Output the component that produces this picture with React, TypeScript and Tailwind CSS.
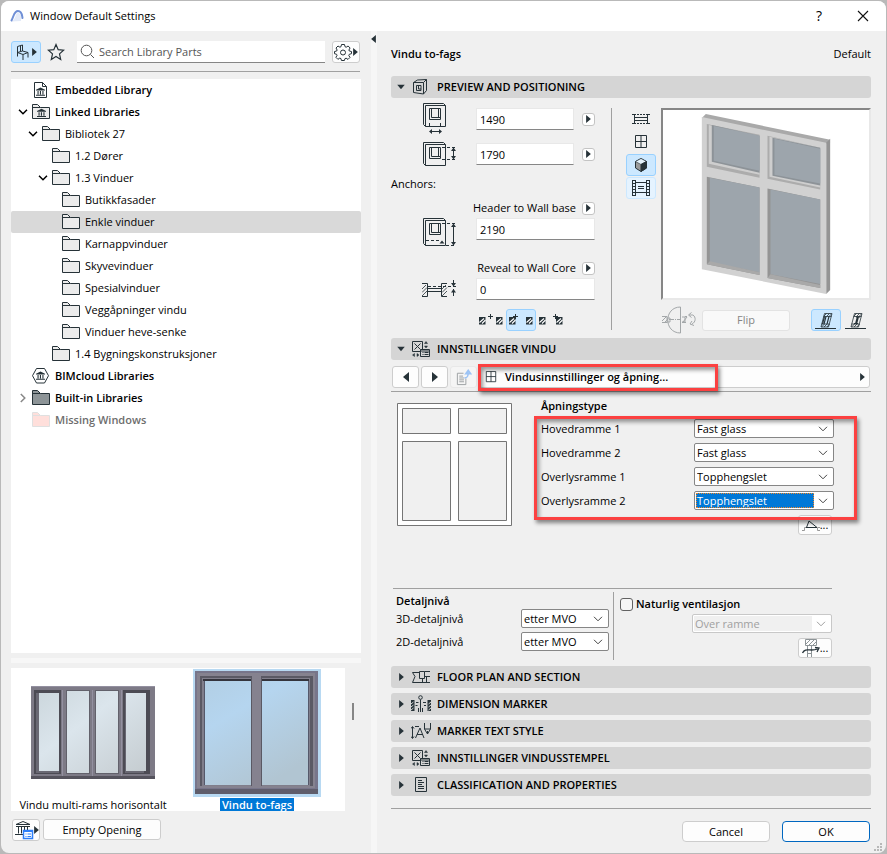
import React, { useState } from 'react';

const INK = '#263238';

type IconProps = { className?: string };

const Arrow: React.FC<{ dir: 'left' | 'right' | 'down'; className?: string }> = ({ dir, className }) => {
  const points = {
    left: '6,0 6,10 0,5',
    right: '0,0 0,10 6,5',
    down: '0,1 10,1 5,7',
  };
  return (
    <svg viewBox={dir === 'down' ? '0 0 10 8' : '0 0 6 10'} className={className} fill={INK} aria-hidden="true">
      <polygon points={points[dir]} />
    </svg>
  );
};

const Chevron: React.FC<IconProps> = ({ className }) => (
  <svg viewBox="0 0 10 6" className={className} fill="none" stroke="currentColor" aria-hidden="true">
    <path d="M1 .8 5 4.8 9 .8" />
  </svg>
);

const Bank = () => (
  <g fill={INK} stroke="none">
    <path d="M4.500 0 9 2.200V3H0v-.8z" />
    <path d="M1.500 3.500h1.100V7H1.500zM3.900 3.500H5V7H3.900zM6.400 3.500h1.100V7H6.400zM0 7.200h9v1H0z" />
  </g>
);

const Folder: React.FC<{ kind: string }> = ({ kind }) => {
  const missing = kind === 'missing';
  const fill = missing ? '#ffdfdb' : kind === 'builtin' ? '#8d9497' : '#ececec';
  const stroke = missing ? '#dfe0e0' : INK;
  if (kind === 'embedded') {
    return (
      <svg viewBox="0 0 19 18" className="h-[18px] w-[19px]" fill="#fff" stroke={INK} aria-hidden="true">
        <path d="M2.500 1.500h8l4 4v11h-12zM10.500 1.500v4h4" />
        <g transform="translate(4 6.500)"><Bank /></g>
      </svg>
    );
  }
  if (kind === 'cloud') {
    return (
      <svg viewBox="0 0 19 18" className="h-[18px] w-[19px]" fill="#fff" stroke={INK} aria-hidden="true">
        <path d="M4.500 1.500h8l4 7.200-4 7.300h-8l-4-7.300z" />
        <g transform="translate(4 4.600)"><Bank /></g>
      </svg>
    );
  }
  return (
    <svg viewBox="0 0 19 18" className="h-[18px] w-[19px]" fill={fill} stroke={stroke} aria-hidden="true">
      <path d="M.5 15.500V1.500h5l3 3h9v11z" />
      <path d="M.5 4.500h8" />
      {kind === 'linked' && <g transform="translate(5 5.800)"><Bank /></g>}
    </svg>
  );
};

const CubeIcon = () => (
  <svg viewBox="0 0 20 18" className="h-[18px] w-5" fill="none" stroke={INK} aria-hidden="true">
    <path d="M2.500 4.500h10v11.500l-10-1.500zM2.500 4.500l4-2.500 9-.5v11l-3 3.500M12.500 4.500l3-3" />
    <path d="M5.500 7.500h4.500v5h-4.500zM7.500 7.500v3.500h2.500" />
  </svg>
);

const StampIcon = () => (
  <svg viewBox="0 0 20 18" className="h-[18px] w-5" fill="none" stroke={INK} aria-hidden="true">
    <path d="M1.500 1.500h10v10h-10zM3.500 3.500l6 6M9.500 3.500l-6 6" />
    <path d="M9.500 9.500h9v7h-9z" fill="#d5d5d5" />
    <path d="M9.500 11h9M11.500 12.500h1M13.500 12.500h4M11.500 14.500h1M13.500 14.500h4" />
    <path d="M13.500 3.500l1.500-2 1.500 2zM13.500 6l1.500 2 1.500-2zM3.500 13.500l-2 1.500 2 1.500zM6 13.500 8 15l-2 1.500z" fill={INK} strokeWidth=".5" />
  </svg>
);

const FloorPlanIcon = () => (
  <svg viewBox="0 0 20 18" className="h-[18px] w-5" fill="none" stroke={INK} aria-hidden="true">
    <path d="M8 4.500H1.500l2.500 4-2.500 6H19M8.500 3.500h5v7h-5zM13.500 3.500H19M13.500 8.500H19M15.500 8.500v6M11.500 10.500v4" />
  </svg>
);

const DimensionIcon = () => (
  <svg viewBox="0 0 20 18" className="h-[18px] w-5" fill="none" stroke={INK} aria-hidden="true">
    <path d="M0 5h3.500v11H0zM20 5h-3.500v11H20z" fill={INK} stroke="none" />
    <path d="M0 9l2.500-2M0 12l2.500-2M0 15l2.500-2M17.500 9 20 7M17.500 12l2.500-2M17.500 15l2.500-2" stroke="#d5d5d5" />
    <circle cx="9.500" cy="2.500" r="1.800" />
    <path d="M9.500 4.500V17M5 7.500h2.500M12 7.500h3M7.500 13v4M11.500 13v4M4.500 10.500h2M13 10.500h2" />
  </svg>
);

const TextStyleIcon = () => (
  <svg viewBox="0 0 20 18" className="h-[18px] w-5" fill="none" stroke={INK} aria-hidden="true">
    <path d="M1.500 5v11M0 6.500l1.500-2 1.500 2M0 14.500l1.500 2 1.500-2M4 4.500h4M4.500 16 9 6l4 10M6 12.500h6" />
    <path d="M13.500 1v6l3 5 3-5V1M13.500 7h6M16.500 12v-3" />
  </svg>
);

const ClassIcon = () => (
  <svg viewBox="0 0 20 18" className="h-[18px] w-5" fill="none" stroke={INK} aria-hidden="true">
    <path d="M4.500 1.500h11v14h-11zM7 4.500h4M7 6.500h6M7 8.500h4M7 10.500h6M7 12.500h6" />
  </svg>
);

const GridWindow: React.FC<IconProps> = ({ className }) => (
  <svg viewBox="0 0 14 14" className={className} fill="none" stroke={INK} aria-hidden="true">
    <path d="M1.500.5h11v12h-11zM7 .5v12M1.500 6.500h11" />
  </svg>
);

const WidthIcon = () => (
  <svg viewBox="0 0 36 32" className="h-8 w-9" fill="none" stroke={INK} aria-hidden="true">
    <path d="M3.500 2.500h20v21h-20zM3.500 23.500l-2-2V.5h20l2 2M7.500 5.500h11v11h-11zM9.500 5.500v9h9M16.500 5.500v9" />
    <path d="M7.500 20v3M18.500 20v3M8 28.500h11" />
    <path d="M7 28.500 10 26v5zM20 28.500 17 26v5z" fill={INK} stroke="none" />
  </svg>
);

const HeightIcon = () => (
  <svg viewBox="0 0 36 32" className="h-8 w-9" fill="none" stroke={INK} aria-hidden="true">
    <path d="M3.500 6.500h20v21h-20zM3.500 27.500l-2-2v-21h20l2 2M7.500 9.500h11v11h-11zM9.500 9.500v9h9M16.500 9.500v9M31.500 10v11" />
    <path d="M20 9.500h14M20 21.500h14" strokeDasharray="3 2" />
    <path d="M31.500 9.500 29 13h5zM31.500 21.500 29 18h5z" fill={INK} stroke="none" />
  </svg>
);

const HeaderAnchorIcon = () => (
  <svg viewBox="0 0 36 30" className="h-[30px] w-9" fill="none" stroke={INK} aria-hidden="true">
    <path d="M3.500 2.500h20v25h-20zM3.500 27.500l-2-2V.5h20l2 2M7.500 5.500h11v11h-11zM9.500 5.500v9h9M16.500 5.500v9M31.500 7v19" />
    <path d="M20 5.500h14M4 22.500h14M24 27.500h10" strokeDasharray="3 2" />
    <path d="M31.500 5.500 29 9h5zM31.500 27.500 29 24h5zM20 22.500l-2.500 3h5z" fill={INK} stroke="none" />
  </svg>
);

const RevealIcon = () => (
  <svg viewBox="0 0 36 24" className="h-6 w-9" fill="none" stroke={INK} aria-hidden="true">
    <path d="M0 5.500h5.500v13H0M25 5.500h-5.500v13H25" />
    <path d="M0 11l4-4M0 14.500l5-5M0 18l5-5M20 11l4-4M20 14.500l5-5M20 18l5-5" strokeWidth=".8" />
    <path d="M6 10.500h13M6 13.500h13M31.500 2v6M31.500 11v7" />
    <path d="M6 8.500h28" strokeDasharray="3 2" />
    <path d="M31.500 8.500 29 5h5zM31.500 11 29 14.500h5z" fill={INK} stroke="none" />
  </svg>
);

const Hatch: React.FC<{ x: number }> = ({ x }) => (
  <g>
    <path d={`M${x} 6h6.500v7.500h-6.500z`} fill={INK} stroke="none" />
    <path d={`M${x + 0.5} 11.500l4.500-4M${x + 3} 12.500l3.500-3.500`} stroke="#fff" strokeWidth="1.100" />
  </g>
);

// the small cross marks which side of the wall carries the anchor
const AnchorGlyph: React.FC<{ first: number; second: number; cross: number }> = ({ first, second, cross }) => (
  <svg viewBox="0 0 26 18" className="h-[18px] w-[26px]" fill="none" aria-hidden="true">
    <Hatch x={first} />
    <Hatch x={second} />
    <path d={`M${cross - 2} 5.500h5M${cross + 0.5} 3v5`} stroke={INK} />
  </svg>
);

const SectionBar: React.FC<{ title: string; icon: React.ReactNode; open?: boolean }> = ({ title, icon, open }) => (
  <button type="button" aria-expanded={!!open} className="flex h-[22px] w-full shrink-0 items-center rounded-[3px] bg-[#d5d5d5] text-left font-semibold">
    <span className="flex w-5 justify-center">
      <Arrow dir={open ? 'down' : 'right'} className={open ? 'h-[6px] w-2' : 'h-2 w-[5px]'} />
    </span>
    {icon}
    <span className="ml-[6px]">{title}</span>
  </button>
);

const StepButton: React.FC<{ label: string }> = ({ label }) => (
  <button type="button" aria-label={label} className="flex h-[13px] w-[13px] shrink-0 items-center justify-center rounded-[3px] border border-[#c4c4c4] bg-white">
    <Arrow dir="right" className="h-2 w-[5px]" />
  </button>
);

const fieldClass = 'h-[22px] w-full border border-[#e8e8e8] border-b-[#868686] bg-white px-[3px] outline-none';

type DropProps = {
  id: string;
  value: string;
  label?: string;
  selected?: boolean;
  disabled?: boolean;
  options?: string[];
};

const Drop: React.FC<DropProps> = ({ id, value, label, selected, disabled, options = [] }) => {
  const [current, setCurrent] = useState(value);
  return (
    <div className={`flex h-[19px] w-full items-center rounded-[2px] border bg-white p-px ${disabled ? 'border-[#c8c8c8] text-[#a0a0a0]' : 'border-[#868686]'}`}>
      <select
        id={id}
        aria-label={label}
        value={current}
        disabled={disabled}
        onChange={(e) => setCurrent(e.target.value)}
        className={`h-[15px] min-w-0 flex-1 appearance-none outline-none ${selected ? 'border border-dotted border-[#f08728] bg-[#0078d7] leading-[13px] text-white' : 'pl-px leading-[15px]'} ${disabled ? 'bg-[#f0f0f0] opacity-100' : ''}`}
      >
        <option>{value}</option>
        {options.map((o) => <option key={o}>{o}</option>)}
      </select>
      <span className="flex w-[18px] justify-center text-[#444]">
        <Chevron className={disabled ? 'h-[6px] w-[10px] opacity-50' : 'h-[6px] w-[10px]'} />
      </span>
    </div>
  );
};

const tree = [
  { name: 'Embedded Library', depth: 0, kind: 'embedded', bold: true },
  { name: 'Linked Libraries', depth: 0, kind: 'linked', bold: true, state: 'open' },
  { name: 'Bibliotek 27', depth: 1, kind: 'folder', state: 'open' },
  { name: '1.2 Dører', depth: 2, kind: 'folder' },
  { name: '1.3 Vinduer', depth: 2, kind: 'folder', state: 'open' },
  { name: 'Butikkfasader', depth: 3, kind: 'folder' },
  { name: 'Enkle vinduer', depth: 3, kind: 'folder' },
  { name: 'Karnappvinduer', depth: 3, kind: 'folder' },
  { name: 'Skyvevinduer', depth: 3, kind: 'folder' },
  { name: 'Spesialvinduer', depth: 3, kind: 'folder' },
  { name: 'Veggåpninger vindu', depth: 3, kind: 'folder' },
  { name: 'Vinduer heve-senke', depth: 3, kind: 'folder' },
  { name: '1.4 Bygningskonstruksjoner', depth: 2, kind: 'folder' },
  { name: 'BIMcloud Libraries', depth: 0, kind: 'cloud', bold: true },
  { name: 'Built-in Libraries', depth: 0, kind: 'builtin', bold: true, state: 'closed' },
  { name: 'Missing Windows', depth: 0, kind: 'missing', bold: true },
];

const indents = ['pl-[7px]', 'pl-[17px]', 'pl-[27px]', 'pl-[37px]'];

const MultiThumb = () => (
  <svg viewBox="0 0 128 128" className="h-32 w-32 shrink-0" aria-hidden="true">
    <defs>
      <linearGradient id="paleGlass" x1="0" y1="0" x2="1" y2="1">
        <stop offset="0" stopColor="#ccd7dd" />
        <stop offset=".4" stopColor="#dbe5ec" />
        <stop offset="1" stopColor="#c5ccd0" />
      </linearGradient>
    </defs>
    <path d="M2 17h124v93H2z" fill="#7d7a86" />
    <path d="M5 21h27v84H5zM94 21h27v84H94z" fill="#4c4b54" />
    <path d="M7 24h23v80H7zM96 24h19v80H96z" fill="#696873" />
    <path d="M37 21h24v84H37zM66 21h24v84H66z" fill="#62616b" />
    <path d="M10 24h20v78H10zM38 22h22v82H38zM67 22h22v82H67zM97 24h20v78H97z" fill="url(#paleGlass)" />
    <path d="M2 17.500h124M33.500 21v86M63.500 21v86M92.500 21v86" stroke="#9390a0" fill="none" />
    <path d="M2 107h124v3H2z" fill="#55535d" />
  </svg>
);

const TwoThumb = () => (
  <svg viewBox="0 0 128 128" className="h-32 w-32 shrink-0 bg-[#b8d9f2]" aria-hidden="true">
    <defs>
      <linearGradient id="blueGlass" x1="0" y1="0" x2=".6" y2="1">
        <stop offset="0" stopColor="#b2cfe5" />
        <stop offset=".35" stopColor="#b5d5ef" />
        <stop offset="1" stopColor="#b1c5d2" />
      </linearGradient>
    </defs>
    <path d="M2 2h123v123H2z" fill="#77758a" />
    <path d="M4 4h118v115H4z" fill="#85828f" />
    <path d="M7 7h52v110H7zM68 7h52v110H68z" fill="#5a5964" />
    <path d="M9 9h49v108H9zM69 9h48v108H69z" fill="#807e8b" />
    <path d="M10 10h48v2H10zM69 10h47v2H69z" fill="#34343c" />
    <path d="M12 12h46v104H12zM69 12h46v104H69z" fill="url(#blueGlass)" />
    <path d="M11.500 12v104M115.500 12v104" fill="none" stroke="#55586a" />
    <path d="M2 120h123v5H2z" fill="#5f5d6b" />
  </svg>
);

const PreviewDrawing = () => (
  <svg viewBox="0 0 207 189" className="h-full w-full" preserveAspectRatio="xMidYMid meet" aria-hidden="true">
    <path d="M39 8l4-4 125 26-3 4z" fill="#a9a9a9" />
    <path d="M164 33l4-4v152l-4 4z" fill="#949494" />
    <path d="M39 7l125 26v152L39 160z" fill="#d1d1d1" />
    <path d="M44 14l53 11v43L44 57zM105 26l53 12v42l-53-11z" fill="#acacac" />
    <path d="M46 15l51 11v39L46 54zM107 27l51 11v40l-51-11z" fill="#cecece" />
    <path d="M49 15l48 11v37L49 52zM110 28l48 10v38l-48-10z" fill="#8d9398" />
    <path d="M51 16l46 10v35L51 51zM112 29l46 10v35l-46-9z" fill="#9da5ac" />
    <path d="M44 67l53 11v88L44 155zM105 79l53 11v89l-53-10z" fill="#949494" />
    <path d="M47 68l50 10v85L47 153zM108 80l50 10v85l-50-10z" fill="#9da5ac" />
    <path d="M44 155l3-3 50 11v3zM105 169l3-4 50 11v3z" fill="#a9a9a9" />
  </svg>
);

const ViewButton: React.FC<{ label: string; className?: string; children: React.ReactNode }> = ({ label, className = '', children }) => (
  <button type="button" aria-label={label} className={`flex h-[22px] w-[30px] items-center justify-center rounded-[3px] ${className}`}>
    {children}
  </button>
);

const activeTool = 'border border-[#99d1ff] bg-[#cce8ff]';

const LibraryPanel = () => {
  const [active, setActive] = useState('Enkle vinduer');
  return (
    <aside className="mr-[10px] flex w-[350px] shrink-0 flex-col pt-[10px] pb-3">
      <div className="flex items-center pr-px">
        <button type="button" aria-label="Library view" className={`flex h-[22px] w-[30px] items-center justify-center gap-[3px] rounded-[3px] ${activeTool}`}>
          <svg viewBox="0 0 14 18" className="h-[18px] w-[14px]" fill="none" stroke={INK} aria-hidden="true">
            <path d="M2.500 13.500V3.500L7.500 2v6M2.500 9.500l5-1.500 5.500 1.500v5M2.500 9.500l5.500 2 5-2M8 11.500V17M5.500 3v5" />
          </svg>
          <Arrow dir="right" className="h-2 w-[5px]" />
        </button>
        <button type="button" aria-label="Favorites" className="ml-[6px]">
          <svg viewBox="0 0 18 18" className="h-[18px] w-[18px]" fill="none" stroke={INK} strokeWidth="1.200" aria-hidden="true">
            <path d="M9 1.500l2.200 5.200 5.400.5-4.100 3.700 1.200 5.500L9 13.500l-4.700 2.900 1.200-5.500L1.400 7.200l5.400-.5z" />
          </svg>
        </button>
        <label className="ml-3 flex h-[22px] flex-1 items-center gap-[4px] border-b border-[#868686] bg-white pl-[3px]">
          <svg viewBox="0 0 15 15" className="h-[15px] w-[15px]" fill="none" stroke="#555" aria-hidden="true">
            <circle cx="6.500" cy="6.500" r="5.300" />
            <path d="M10.500 10.500 14 14" />
          </svg>
          <input type="text" aria-label="Search Library Parts" placeholder="Search Library Parts" className="min-w-0 flex-1 outline-none placeholder:text-[#555]" />
        </label>
        <button type="button" aria-label="Settings" className="ml-[7px] flex h-[22px] w-7 items-center justify-center gap-px rounded-[3px] border border-[#cdcdcd] bg-[#fdfdfd]">
          <svg viewBox="0 0 18 18" className="h-[18px] w-[18px]" fill="none" stroke={INK} strokeLinejoin="round" aria-hidden="true">
            <path d="M7.500 1.500h3l.5 2.200 1.200.5L14.100 3l2 2-1.200 2 .4 1 2.200.5v2.200l-2.200.6-.5 1.200 1.200 1.900-2 2-1.900-1.200-1.200.5-.5 1.800h-3L7 15.600l-1.200-.5-1.900 1.200-2-2L3 12.500l-.4-1.200-2.100-.6V8.500l2.200-.5.4-1L2 5l2-2 1.900 1.200L7 3.700z" />
            <circle cx="9" cy="9.500" r="2.500" />
          </svg>
          <Arrow dir="right" className="h-2 w-[5px]" />
        </button>
      </div>
      <hr className="mt-2 mr-px border-[#a0a0a0]" />

      <ul className="mt-[7px] flex-1 bg-white">
        {tree.map((node) => (
          <li key={node.name}>
            <button
              type="button"
              onClick={() => setActive(node.name)}
              className={`flex h-[22px] w-full items-center rounded-[2px] text-left ${indents[node.depth]} ${active === node.name ? 'bg-[#d9d9d9]' : ''} ${node.bold ? 'font-semibold' : ''} ${node.kind === 'missing' ? 'text-[#6d6d6d]' : ''}`}
            >
              <span className="mr-1 flex w-[10px] justify-center">
                {node.state && <Chevron className={node.state === 'open' ? 'h-[6px] w-[10px] stroke-[1.5]' : 'h-[6px] w-[10px] -rotate-90 stroke-[1.5] text-[#888]'} />}
              </span>
              <Folder kind={node.kind} />
              <span className="ml-1">{node.name}</span>
            </button>
          </li>
        ))}
      </ul>
      <div className="my-[5px] h-[5px] bg-[#f7f7f7]" />
      <div className="flex items-start">
        <div className="flex h-[143px] w-[334px] bg-white pt-px">
          <figure className="flex w-[164px] shrink-0 flex-col items-center">
            <MultiThumb />
            <figcaption className="mt-px shrink-0 leading-[13px] whitespace-nowrap">Vindu multi-rams horisontalt</figcaption>
          </figure>
          <figure className="flex w-[164px] shrink-0 flex-col items-center">
            <TwoThumb />
            <figcaption className="mt-px shrink-0 bg-[#0078d7] px-[2px] leading-[13px] font-semibold whitespace-nowrap text-white">Vindu to-fags</figcaption>
          </figure>
        </div>
        <div className="mt-[35px] ml-[7px] h-[17px] w-[2px] bg-[#868686]" />
      </div>
      <div className="mt-2 flex gap-[3px] pl-px">
        <button type="button" aria-label="Library manager" className="flex h-[22px] w-7 items-center justify-center rounded-[3px] border border-[#cdcdcd] bg-[#fdfdfd]">
          <svg viewBox="0 0 20 20" className="h-5 w-5 shrink-0" fill="none" stroke={INK} aria-hidden="true">
            <path d="M2 4.500 9 1.500l7 3M2 4.500h14M2 6.500h14M4.500 6.500v7M7.500 6.500v7M10.500 6.500v7M13.500 6.500v7M1 14.500h9" />
            <path d="M9.500 10.500h9v8h-9z" fill="#fff" stroke="#2d7ff9" strokeWidth="1.500" />
            <path d="M9.500 11.500h9M11.500 14h1M13.500 14H17M11.500 16.500h1M13.500 16.500H17" stroke="#2d7ff9" />
          </svg>
          <Arrow dir="right" className="h-2 w-[5px]" />
        </button>
        <button type="button" className="h-[21px] w-[118px] rounded-[3px] border border-[#cdcdcd] bg-[#fdfdfd]">Empty Opening</button>
      </div>
    </aside>
  );
};

const PreviewSection = () => (
  <div className="flex h-[240px] shrink-0">
    <div className="w-[204px] shrink-0 pt-[5px]">
      <div className="flex h-8 items-center">
        <span className="w-[85px] pl-[31px]"><WidthIcon /></span>
        <span className="mr-2 w-[98px]"><input aria-label="Width" defaultValue="1490" className={fieldClass} /></span>
        <StepButton label="Width options" />
      </div>
      <div className="mt-[3px] flex h-8 items-center">
        <span className="w-[85px] pl-[31px]"><HeightIcon /></span>
        <span className="mr-2 w-[98px]"><input aria-label="Height" defaultValue="1790" className={fieldClass} /></span>
        <StepButton label="Height options" />
      </div>
      <p className="h-7 leading-7">Anchors:</p>
      <div className="h-[60px]">
        <div className="flex h-5 items-center justify-end gap-[6px]">
          <label htmlFor="header">Header to Wall base</label>
          <StepButton label="Header anchor" />
        </div>
        <div className="flex">
          <span className="w-[85px] shrink-0 pl-[31px]"><HeaderAnchorIcon /></span>
          <input id="header" defaultValue="2190" className={fieldClass} />
        </div>
      </div>
      <div className="h-[60px]">
        <div className="flex h-5 items-center justify-end gap-[6px]">
          <label htmlFor="reveal">Reveal to Wall Core</label>
          <StepButton label="Reveal anchor" />
        </div>
        <div className="flex">
          <span className="w-[85px] shrink-0 pl-[31px]"><RevealIcon /></span>
          <input id="reveal" defaultValue="0" className={fieldClass} />
        </div>
      </div>
      <div className="-mt-[9px] flex justify-end pr-[29px]">
        <ViewButton label="Anchor outside"><AnchorGlyph first={1} second={18} cross={12} /></ViewButton>
        <ViewButton label="Anchor center" className={activeTool}><AnchorGlyph first={1} second={18} cross={7} /></ViewButton>
        <ViewButton label="Anchor inside"><AnchorGlyph first={1} second={18} cross={17} /></ViewButton>
      </div>
    </div>

    <div className="mt-[10px] mr-[14px] ml-4 h-[222px] w-px shrink-0 bg-[#a0a0a0]" />

    <div className="flex w-[30px] shrink-0 flex-col gap-px pt-[10px]">
      <ViewButton label="Plan view">
        <svg viewBox="0 0 18 12" className="h-3 w-[18px]" fill="none" stroke={INK} aria-hidden="true">
          <path d="M2.500 4.500h13M2.500 7.500h13M0 1.500h4M0 10.500h4M2.500 1.500v9M14 1.500h4M14 10.500h4M15.500 1.500v9" />
          <path d="M5 1.500h8M5 10.500h8" strokeDasharray="2 1" />
        </svg>
      </ViewButton>
      <ViewButton label="Elevation view"><GridWindow className="h-[14px] w-[14px]" /></ViewButton>
      <ViewButton label="3D view" className={activeTool}>
        <svg viewBox="0 0 14 16" className="h-4 w-[14px]" stroke={INK} aria-hidden="true">
          <path d="M7 1.500l5.500 3v6.500L7 14.500 1.500 11V4.500z" fill="#9b9b9b" />
          <path d="M7 1.500l5.500 3L7 7.500 1.500 4.500z" fill="#e5f2fb" strokeWidth=".6" />
          <path d="M7 7.500l5.500-3V11L7 14.500z" fill={INK} />
        </svg>
      </ViewButton>
      <ViewButton label="Info view" className="border border-[#cce8ff] bg-[#e5f3ff]">
        <svg viewBox="0 0 18 16" className="h-4 w-[18px]" fill="none" stroke={INK} aria-hidden="true">
          <path d="M3.500 0v16M14.500 0v16M4 2.500h10M4 12.500h10M6 6.500h6M6 8.500h6M.5 0v16M17.500 0v16" />
          <path d="M2 0v16M16 0v16" strokeWidth="2" strokeDasharray="1 2" />
        </svg>
      </ViewButton>
    </div>

    <div className="min-w-0 flex-1 pt-[10px] pl-[5px]">
      <div className="h-[192px] border-2 border-t-[#868686] border-r-[#e8e8e8] border-b-[#e8e8e8] border-l-[#868686] bg-white">
        <PreviewDrawing />
      </div>
      <div className="mt-[9px] flex items-center">
        <svg viewBox="0 0 36 28" className="-my-[3px] h-7 w-9" fill="none" stroke="#a3a7a9" aria-hidden="true">
          <path d="M19.500 1v26c-17 0-17-26 0-26zM1 10.500h5v6H1M1 15l4-4M3 17l4-4M6 12h3v4H6M21 11h3v5h-3M24 10.500h2M21 16.500h4M22 16l4-5" />
          <path d="M8 13.500h12" strokeDasharray="5 1 1 1" />
          <path d="M28 9h4c3 2 3 7-1 9M30.500 6.500 27.500 9l3 2.500M31 15l-2 3 4 1.500" />
        </svg>
        <button type="button" disabled className="ml-[5px] h-[21px] w-[88px] rounded-[3px] border border-[#e3e3e3] bg-[#f9f9f9] text-[#868686]">Flip</button>
        <div className="ml-auto flex">
          {['Opening side left', 'Opening side right'].map((name, i) => (
            <ViewButton key={name} label={name} className={i === 0 ? activeTool : ''}>
              <svg viewBox="0 0 22 18" className="h-[18px] w-[22px]" fill="none" stroke={INK} aria-hidden="true">
                <path d="M0 17.500h21" />
                <path d="M6 16 9.500 2.500H17L13.500 16z" strokeWidth=".8" />
                <path d="M8.500 5.500h8M6.500 13h8" strokeWidth=".8" />
                <path d="M9 5l2.500-2.500M11.500 5.500l3-3M14 5.500l2.500-2.500M6.500 16l3-3M9 16l3-3M12 16l2.500-3" strokeWidth=".8" />
                {i === 0 ? (
                  <path d="M9 13l2-7.500M12 13l2-7.500M7.500 13l2-7.500" strokeWidth="1.100" />
                ) : (
                  <path d="M10.500 13l2-7.500M11.500 13l2-7.500M9 12.500h4M11 6h4" strokeWidth="1.100" />
                )}
              </svg>
            </ViewButton>
          ))}
        </div>
      </div>
    </div>
  </div>
);

const frames = [
  { id: 'h1', name: 'Hovedramme 1', value: 'Fast glass', other: 'Topphengslet' },
  { id: 'h2', name: 'Hovedramme 2', value: 'Fast glass', other: 'Topphengslet' },
  { id: 'o1', name: 'Overlysramme 1', value: 'Topphengslet', other: 'Fast glass' },
  { id: 'o2', name: 'Overlysramme 2', value: 'Topphengslet', other: 'Fast glass', selected: true },
];

const calloutClass = 'pointer-events-none absolute border-[3px] border-[#fb4141] shadow-[2px_3px_4px_rgba(0,0,0,0.45),inset_2px_3px_4px_rgba(0,0,0,0.4)]';

const smallButton = 'flex h-5 w-[34px] items-center justify-center rounded-[3px] border border-[#cdcdcd] bg-[#fdfdfd]';

const WindowSettings = () => {
  const [vent, setVent] = useState(false);
  return (
    <div>
      <div className="mt-[6px] flex gap-[2px] pr-px pl-px">
        <button type="button" aria-label="Previous page" className="flex h-[22px] w-[27px] items-center justify-center rounded-[3px] border border-[#cdcdcd] bg-[#fdfdfd]">
          <Arrow dir="left" className="h-[10px] w-[6px]" />
        </button>
        <button type="button" aria-label="Next page" className="flex h-[22px] w-[27px] items-center justify-center rounded-[3px] border border-[#cdcdcd] bg-[#fdfdfd]">
          <Arrow dir="right" className="h-[10px] w-[6px]" />
        </button>
        <button type="button" aria-label="Parent page" disabled className="flex h-[22px] w-[27px] items-center justify-center rounded-[3px] border border-[#e8e8e8] bg-[#f5f5f5]">
          <svg viewBox="0 0 18 18" className="h-[17px] w-[17px]" fill="none" stroke="#9b9fa1" aria-hidden="true">
            <path d="M9 4.500H2.500v12h9V10M4.500 7.500h4M4.500 9.500h5M4.500 11.500h5M4.500 13.500h5" />
            <path d="M10 9.500c3.500 0 4-2 4-6M11.500 5 14 1.500 16.500 5z" stroke="#9cc3f5" strokeWidth="1.800" />
          </svg>
        </button>
        <div className="relative min-w-0 flex-1">
          <button type="button" className="flex h-[22px] w-full items-center rounded-[3px] border border-[#cdcdcd] bg-[#fdfdfd] pr-1 pl-[5px] font-semibold">
            <GridWindow className="h-3 w-3" />
            <span className="ml-2">Vindusinnstillinger og åpning...</span>
            <Arrow dir="right" className="ml-auto h-2 w-[5px]" />
          </button>
          <div className={`${calloutClass} -top-[2px] -left-[1px] h-[27px] w-[240px]`} />
        </div>
      </div>
      <hr className="mt-[3px] border-[#a0a0a0]" />

      <div className="mt-[11px] flex items-start">
        <svg viewBox="0 0 116 124" className="ml-[6px] h-[124px] w-[116px] shrink-0" fill="#f0f0f0" stroke="#757575" aria-hidden="true">
          <path d="M.5.5h114v122H.5z" fill="#fff" />
          <path d="M5.500 5.500h48v25h-48zM61.500 5.500h48v25h-48zM5.500 38.500h48v79h-48zM61.500 38.500h48v79h-48z" />
        </svg>
        <div className="ml-7 w-[293px]">
          <h3 className="-mt-[5px] h-4 leading-4 font-semibold">Åpningstype</h3>
          <div className="relative mt-[3px] pt-[2px]">
            <div className="grid gap-[5px]">
              {frames.map((f) => (
                <div key={f.id} className="flex h-[19px] items-center">
                  <label htmlFor={f.id} className="w-[153px]">{f.name}</label>
                  <div className="w-[140px]">
                    <Drop id={f.id} value={f.value} options={[f.other]} selected={f.selected} />
                  </div>
                </div>
              ))}
            </div>
            <button type="button" aria-label="Opening line settings" className={`${smallButton} mt-[5px] ml-auto mr-[2px]`}>
              <svg viewBox="0 0 18 14" className="h-[14px] w-[18px]" fill="none" stroke={INK} aria-hidden="true">
                <path d="M3 9.500h12M4.500 9.500 7 3l8 6.500z" />
                <path d="M0 12.500h2.500v-3H4M18 12.500h-2.500v-3H18" stroke="#999" />
              </svg>
              <span>...</span>
            </button>
            <div className={`${calloutClass} -top-px -left-[7px] h-[104px] w-[323px]`} />
          </div>
        </div>
      </div>

      <div className="mt-[53px] ml-[2px] flex h-[78px] w-[439px] border-t border-[#a0a0a0] pt-[3px]">
        <div className="w-[217px] pl-[3px]">
          <h3 className="h-[17px] leading-[17px] font-semibold">Detaljnivå</h3>
          {['3D-detaljnivå', '2D-detaljnivå'].map((name) => (
            <div key={name} className="mb-1 flex h-[19px] items-center">
              <label htmlFor={name} className="w-[125px]">{name}</label>
              <div className="w-[88px]"><Drop id={name} value="etter MVO" /></div>
            </div>
          ))}
        </div>
        <div className="ml-[3px] h-[68px] w-px bg-[#a0a0a0]" />
        <div className="flex flex-1 flex-col items-end pt-1">
          <label className="flex h-4 w-full items-center gap-[3px] pl-[6px] font-semibold">
            <input
              type="checkbox"
              checked={vent}
              onChange={(e) => setVent(e.target.checked)}
              className="h-[13px] w-[13px] appearance-none rounded-[3px] border border-[#626262] bg-[#f6f6f6] checked:bg-[#0078d7]"
            />
            Naturlig ventilasjon
          </label>
          <div className="mt-[2px] w-[140px]"><Drop id="vent" label="Ventilasjon plassering" value="Over ramme" disabled /></div>
          <button type="button" aria-label="Ventilation settings" className={`${smallButton} mt-[5px]`}>
            <svg viewBox="0 0 18 18" className="h-[18px] w-[18px]" fill="none" stroke="#8d9497" aria-hidden="true">
              <path d="M3.500.5h11v6h-11zM4 5l4-4M7 6l5-5M11 6l3-3M5.500 6.500V18M9.500 6.500V18M5.500 14.500h4" />
              <path d="M.5 14c3-6 8-1 15-4M13 8.500l4 .5-2 4" stroke={INK} strokeWidth="1.300" />
            </svg>
            <span>...</span>
          </button>
        </div>
      </div>
    </div>
  );
};

const App: React.FC = () => (
  <div className="min-h-screen bg-[#b9b9b9] p-px font-['Open_Sans','Noto_Sans',sans-serif] text-[11px] leading-4 text-black">
    <main className="flex min-h-[852px] flex-col overflow-hidden rounded-lg bg-[#f0f0f0]">
      <header className="flex h-[30px] shrink-0 items-center bg-white pr-[17px] pl-[9px]">
        <svg viewBox="0 0 14 14" className="h-[14px] w-[14px]" fill="none" aria-hidden="true">
          <path d="M1 12.500C6 11 5 5 8 3l3 3v6z" fill="#e3eaf8" />
          <path d="M1.500 11.500C4 7 4 2 8 2s4 4 4.500 7" stroke="#6f8fd6" strokeWidth="2" strokeLinecap="round" />
        </svg>
        <h1 className="ml-[6px]">Window Default Settings</h1>
        <button type="button" aria-label="Help" className="ml-auto text-[14px]">?</button>
        <button type="button" aria-label="Close" className="ml-[35px]">
          <svg viewBox="0 0 12 12" className="h-3 w-3" stroke="#111" strokeWidth="1.100" aria-hidden="true">
            <path d="M1 1l10 10M11 1 1 11" />
          </svg>
        </button>
      </header>
      <div className="flex flex-1 pl-[10px]">
        <LibraryPanel />
        <div className="w-[6px] shrink-0 bg-[#f6f6f6] pt-1">
          <Arrow dir="left" className="h-2 w-[5px]" />
        </div>
        <section className="flex min-w-0 flex-1 flex-col pr-[15px] pl-[14px]">
          <div className="flex h-[45px] shrink-0 items-center justify-between">
            <h2 className="font-semibold">Vindu to-fags</h2>
            <span>Default</span>
          </div>
          <SectionBar title="PREVIEW AND POSITIONING" icon={<CubeIcon />} open />
          <PreviewSection />
          <SectionBar title="INNSTILLINGER VINDU" icon={<StampIcon />} open />
          <WindowSettings />
          <div className="flex flex-col gap-[5px]">
            <SectionBar title="FLOOR PLAN AND SECTION" icon={<FloorPlanIcon />} />
            <SectionBar title="DIMENSION MARKER" icon={<DimensionIcon />} />
            <SectionBar title="MARKER TEXT STYLE" icon={<TextStyleIcon />} />
            <SectionBar title="INNSTILLINGER VINDUSSTEMPEL" icon={<StampIcon />} />
            <SectionBar title="CLASSIFICATION AND PROPERTIES" icon={<ClassIcon />} />
          </div>
          <hr className="mt-3 border-[#a0a0a0]" />
          <div className="mt-3 flex justify-end gap-3 pr-px">
            <button type="button" className="h-[21px] w-[88px] rounded-[4px] border border-[#cdcdcd] bg-[#fdfdfd]">Cancel</button>
            <button type="button" className="h-[21px] w-[88px] rounded-[4px] border border-[#0067c0] bg-[#fdfdfd]">OK</button>
          </div>
          <svg viewBox="0 0 9 9" className="mt-auto -mr-3 mb-px h-[9px] w-[9px] self-end" fill="#b8b8b8" aria-hidden="true">
            <path d="M6 0h2v2H6zM3 3h2v2H3zM6 3h2v2H6zM0 6h2v2H0zM3 6h2v2H3zM6 6h2v2H6z" />
          </svg>
        </section>
      </div>
    </main>
  </div>
);

export default App;
